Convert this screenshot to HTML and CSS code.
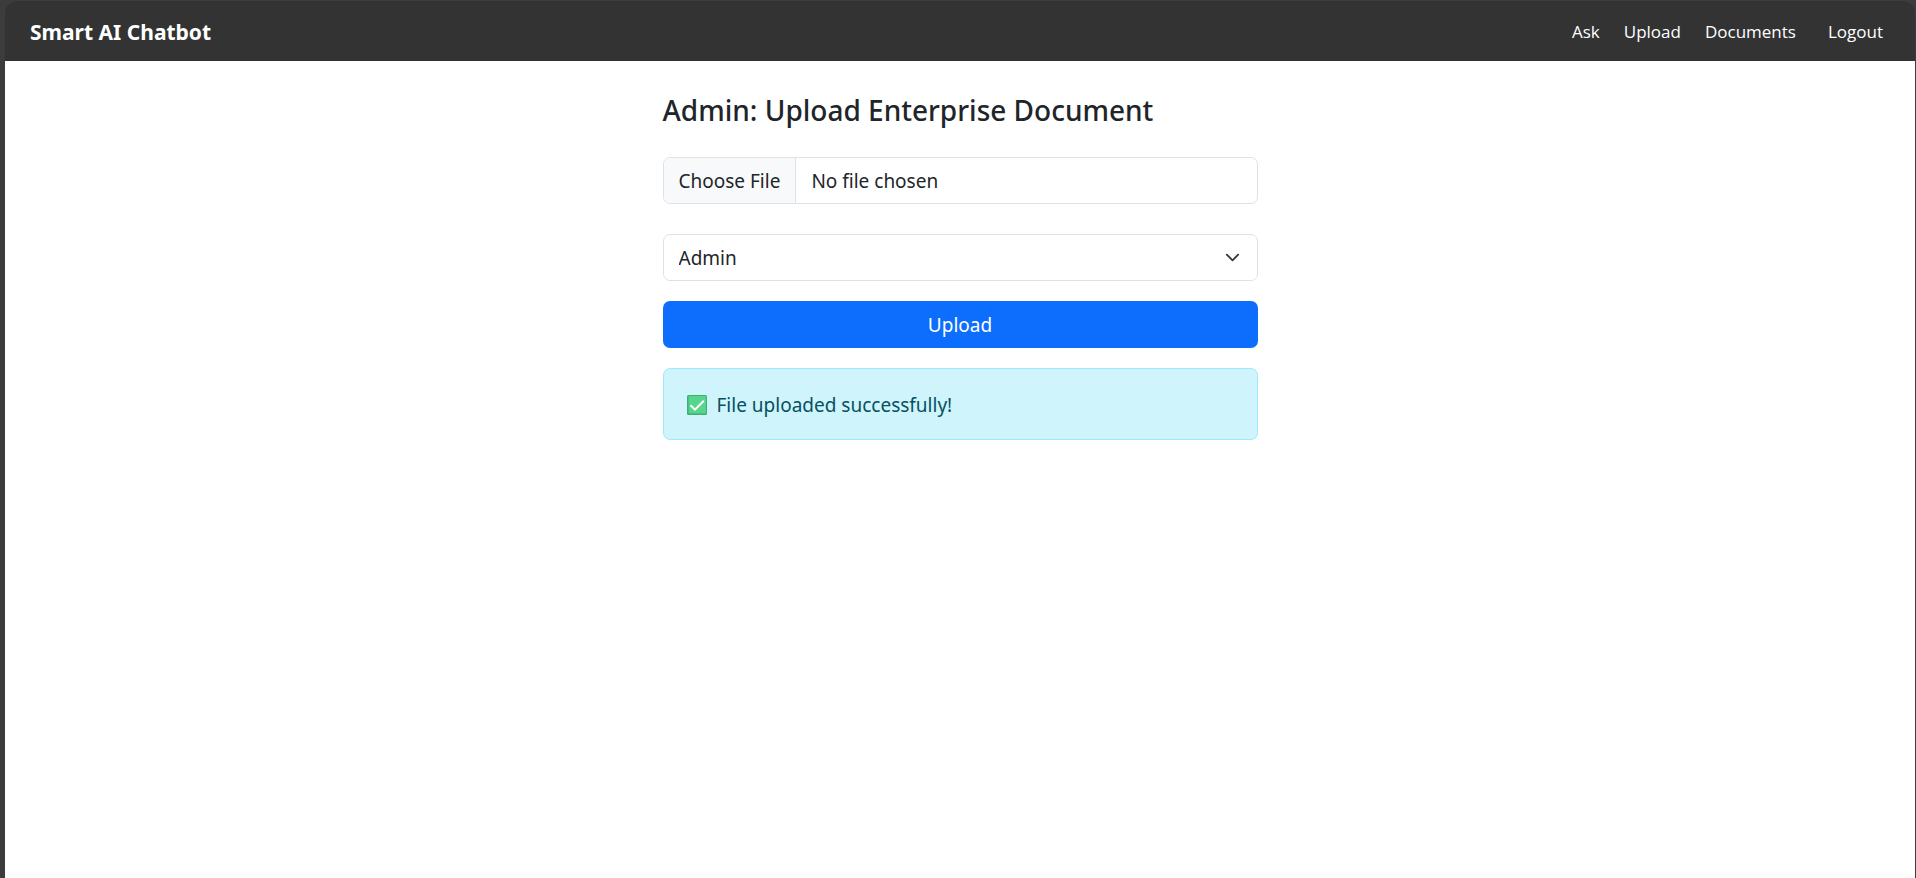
FILE: index.html
```html
<!DOCTYPE html>
<html lang="en">
<head>
<meta charset="utf-8">
<meta name="viewport" content="width=device-width, initial-scale=1">
<title>Smart AI Chatbot</title>
<link rel="stylesheet" href="styles.css">
</head>
<body>
<div class="window">
  <header class="navbar">
    <a class="brand" href="#">Smart AI Chatbot</a>
    <nav class="nav-links">
      <a href="#">Ask</a>
      <a href="#">Upload</a>
      <a href="#">Documents</a>
      <a class="logout" href="#">Logout</a>
    </nav>
  </header>
  <main class="content">
    <h1 class="title">Admin: Upload Enterprise Document</h1>
    <form class="upload-form">
      <input class="file-input" type="file" aria-label="Document file">
      <select class="role-select" aria-label="Role">
        <option>Admin</option>
      </select>
      <button class="submit" type="button">Upload</button>
    </form>
    <div class="alert" role="status">
      <svg class="check" viewBox="0 0 20 20" aria-hidden="true">
        <rect width="20" height="20" rx="1.5" fill="#3fae72"/>
        <rect x="1.5" y="1" width="17.5" height="17.5" rx="1" fill="#55d68c"/>
        <path d="M3.5 10.2 8 14.6 16.8 5.8" fill="none" stroke="#fff" stroke-width="2"/>
      </svg>
      <span>File uploaded successfully!</span>
    </div>
  </main>
</div>
</body>
</html>
```
FILE: styles.css
```css
* {
  box-sizing: border-box;
}

body {
  margin: 0;
  background: #3c3c3c;
  color: #212529;
  font-family: "Noto Sans", "Open Sans", sans-serif;
  font-size: 19px;
  line-height: 30px;
}

.window {
  min-height: 100vh;
  padding: 1px 1px 0 5px;
  display: flex;
  flex-direction: column;
}

.navbar {
  display: flex;
  align-items: center;
  justify-content: space-between;
  height: 60px;
  padding: 2px 32px 0 25px;
  background: #333;
  border-radius: 12px 12px 0 0;
}

.navbar a {
  color: #fff;
  text-decoration: none;
}

.navbar .brand {
  font-size: 21px;
  font-weight: 700;
}

.nav-links {
  display: flex;
  gap: 24px;
  font-family: "Open Sans", "Noto Sans", sans-serif;
  font-size: 17px;
}

.logout {
  margin-left: 8px;
}

.content {
  flex: 1;
  display: flex;
  flex-direction: column;
  align-items: center;
  padding: 30px 20px;
  background: #fff;
}

.title,
.upload-form,
.alert {
  width: 100%;
  max-width: 595px;
}

.title {
  margin: 0 0 28px;
  font-size: 28px;
  font-weight: 500;
  line-height: 38px;
}

.upload-form {
  display: flex;
  flex-direction: column;
  gap: 20px;
  margin-bottom: 20px;
}

.file-input,
.role-select {
  width: 100%;
  height: 47px;
  padding: 8px 15px;
  border: 1px solid #dee2e6;
  border-radius: 7px;
  background-color: #fff;
  color: inherit;
  font: inherit;
}

.file-input {
  margin-bottom: 10px;
  overflow: hidden;
}

.file-input::file-selector-button {
  margin: -8px 15px -8px -15px;
  padding: 8px 15px;
  border: 0 solid #dee2e6;
  border-right-width: 1px;
  border-radius: 0;
  background: #f8f9fa;
  color: inherit;
  font: inherit;
}

.role-select {
  appearance: none;
  background-image: url("data:image/svg+xml,%3Csvg xmlns='http://www.w3.org/2000/svg' viewBox='0 0 16 16'%3E%3Cpath fill='none' stroke='%23343a40' stroke-linecap='round' stroke-linejoin='round' stroke-width='2' d='m2 5 6 6 6-6'/%3E%3C/svg%3E");
  background-repeat: no-repeat;
  background-position: right 17px center;
  background-size: 15px 15px;
}

.submit {
  height: 47px;
  border: 0;
  border-radius: 7px;
  background: #0d6efd;
  color: #fff;
  font: inherit;
}

.alert {
  display: flex;
  align-items: center;
  gap: 10px;
  padding: 21px 23px 19px;
  border: 1px solid #9eeaf9;
  border-radius: 7px;
  background: #cff4fc;
  color: #055160;
}

.check {
  width: 20px;
  height: 20px;
}
```
